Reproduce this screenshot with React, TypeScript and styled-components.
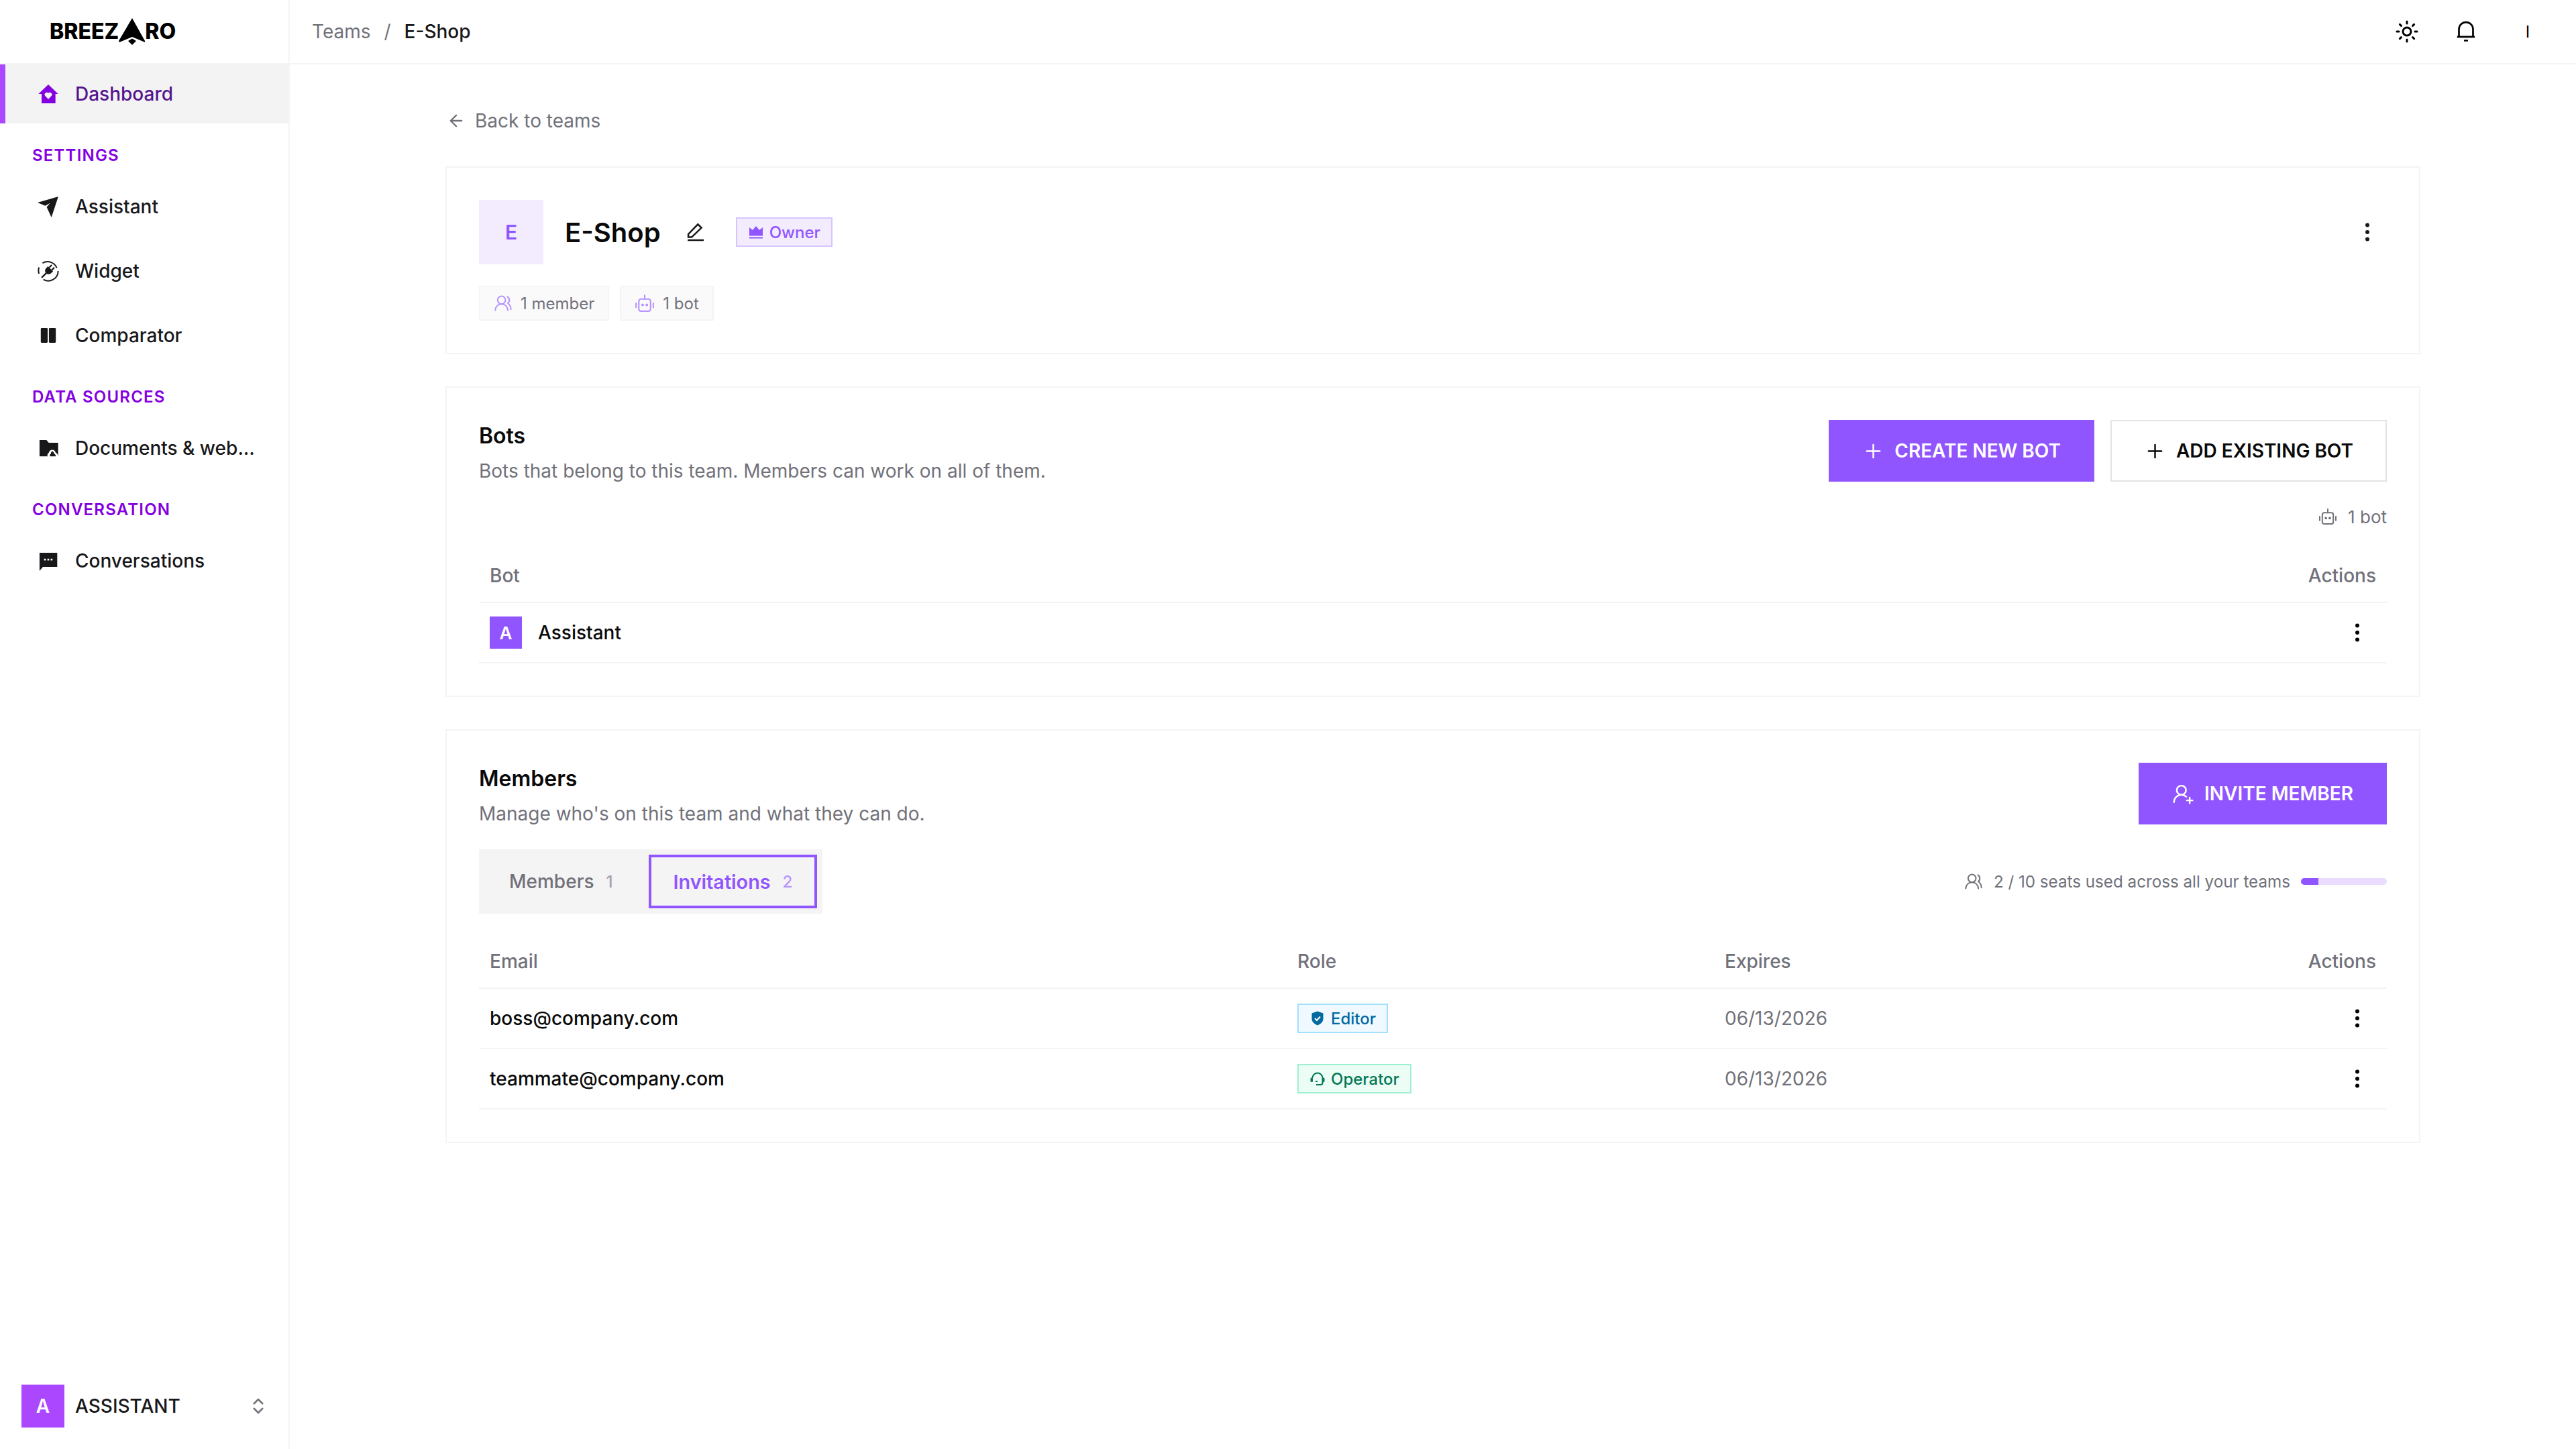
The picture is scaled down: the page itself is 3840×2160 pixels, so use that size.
import React from 'react'
import styled, { createGlobalStyle } from 'styled-components'
import { ArrowLeft, ChevronsUpDown, EllipsisVertical, Plus, Sun, UserRoundPlus, UsersRound } from 'lucide-react'

const GlobalStyle = createGlobalStyle`
    html, body {
        margin: 0;
        background: #fff;
        font-family: Inter, "Noto Sans", sans-serif;
        color: #18181b;
        -webkit-font-smoothing: antialiased;
    }
    * {
        box-sizing: border-box;
    }
`

const violet = '#9155ff'
const line = '#f4f4f5'
const muted = '#71717a'

const Page = styled.div`
    display: flex;
    height: 2160px;
`

const Sidebar = styled.aside`
    display: flex;
    flex-direction: column;
    width: 432px;
    flex-shrink: 0;
    border-right: 2px solid ${line};
`

const LogoBar = styled.div`
    display: flex;
    align-items: flex-start;
    height: 96px;
    padding: 27px 0 0 74px;
    border-bottom: 2px solid ${line};
`

const LogoText = styled.span`
    font-size: 32px;
    font-weight: 800;
    line-height: 24px;
    margin-top: 8px;
    color: #000;
`

const NavRow = styled.div<{ $active?: boolean }>`
    display: flex;
    align-items: center;
    gap: 24px;
    height: 88px;
    margin-bottom: 8px;
    padding-left: 48px;
    border-left: 8px solid ${p => (p.$active ? '#ab47ff' : 'transparent')};
    background: ${p => (p.$active ? '#f3f3f3' : 'transparent')};
    color: ${p => (p.$active ? '#55148f' : '#18181b')};
    font-size: 28px;
    font-weight: 500;
    svg {
        flex-shrink: 0;
        color: ${p => (p.$active ? '#8400e0' : '#18181b')};
    }
`

const NavLabel = styled.div`
    padding: 25px 0 17px 48px;
    font-size: 24px;
    line-height: 30px;
    font-weight: 600;
    letter-spacing: 1.2px;
    color: #8400e0;
`

const SidebarFooter = styled.div`
    display: flex;
    align-items: center;
    margin-top: auto;
    padding: 0 0 32px 32px;
`

const FooterAvatar = styled.div`
    display: flex;
    align-items: center;
    justify-content: center;
    width: 64px;
    height: 64px;
    background: #ab47ff;
    color: #fff;
    font-size: 28px;
    font-weight: 600;
`

const FooterName = styled.span`
    margin-left: 16px;
    width: 258px;
    font-size: 28px;
    font-weight: 500;
`

const Main = styled.main`
    flex: 1;
    display: flex;
    flex-direction: column;
    min-width: 0;
`

const TopBar = styled.header`
    display: flex;
    align-items: center;
    height: 96px;
    padding: 0 24px 0 33px;
    border-bottom: 2px solid ${line};
`

const Crumbs = styled.nav`
    display: flex;
    align-items: center;
    gap: 20px;
    flex: 1;
    font-size: 28px;
    color: ${muted};
`

const CrumbCurrent = styled.span`
    color: #18181b;
    font-weight: 500;
`

const TopButton = styled.div<{ $wide?: boolean }>`
    display: flex;
    align-items: center;
    justify-content: center;
    width: ${p => (p.$wide ? '96px' : '88px')};
    height: 88px;
    color: #000;
    font-size: 24px;
`

const Content = styled.div`
    width: 2944px;
    margin: 0 auto;
    padding-top: 64px;
`

const BackLink = styled.div`
    display: flex;
    align-items: center;
    gap: 14px;
    height: 40px;
    margin-bottom: 48px;
    padding-left: 2px;
    font-size: 28px;
    color: ${muted};
`

const Card = styled.section`
    padding: 48px;
    margin-bottom: 48px;
    border: 2px solid ${line};
    background: #fff;
`

const TeamRow = styled.div`
    display: flex;
    align-items: center;
`

const TeamAvatar = styled.div`
    display: flex;
    align-items: center;
    justify-content: center;
    width: 96px;
    height: 96px;
    background: #f3ecff;
    color: ${violet};
    font-size: 30px;
    font-weight: 600;
`

const TeamName = styled.h1`
    margin: 0 0 0 32px;
    font-size: 40px;
    font-weight: 600;
    color: #0a0a0a;
`

const EditButton = styled.div`
    display: flex;
    margin: 0 45px 0 39px;
`

const OwnerBadge = styled.div`
    display: flex;
    align-items: center;
    gap: 8px;
    height: 44px;
    padding: 0 16px;
    border: 2px solid #d8c4ff;
    background: #f3ecff;
    color: ${violet};
    font-size: 24px;
    font-weight: 500;
`

const CardMenu = styled.div`
    display: flex;
    margin-left: auto;
    margin-right: 11px;
`

const Chips = styled.div`
    display: flex;
    gap: 16px;
    margin-top: 32px;
`

const Chip = styled.div`
    display: flex;
    align-items: center;
    gap: 12px;
    height: 52px;
    padding: 0 20px;
    border: 2px solid ${line};
    background: #fafafa;
    color: ${muted};
    font-size: 24px;
    svg {
        color: #b794ff;
    }
`

const CardHead = styled.div`
    display: flex;
    justify-content: space-between;
    height: 92px;
`

const CardTitle = styled.h2`
    margin: 0;
    font-size: 32px;
    line-height: 48px;
    font-weight: 600;
    color: #0a0a0a;
`

const CardText = styled.p`
    margin: 6px 0 0;
    font-size: 28px;
    line-height: 44px;
    color: ${muted};
`

const Actions = styled.div`
    display: flex;
    gap: 24px;
`

const Button = styled.div<{ $outline?: boolean }>`
    display: flex;
    align-items: center;
    gap: 15px;
    height: 92px;
    padding: 0 48px;
    border: 2px solid ${p => (p.$outline ? '#e4e4e7' : violet)};
    background: ${p => (p.$outline ? '#fff' : violet)};
    color: ${p => (p.$outline ? '#0a0a0a' : '#fff')};
    font-size: 28px;
    font-weight: 600;
`

const CountRow = styled.div`
    display: flex;
    align-items: center;
    justify-content: flex-end;
    gap: 16px;
    height: 40px;
    margin: 32px 0 29px;
    font-size: 26px;
    color: ${muted};
`

const TableRow = styled.div<{ $cols: string }>`
    display: grid;
    grid-template-columns: ${p => p.$cols};
    align-items: center;
    height: 90px;
    padding: 0 0 0 16px;
    border-bottom: 2px solid ${line};
    font-size: 28px;
    font-weight: 500;
    color: #0a0a0a;
`

const HeaderRow = styled(TableRow)`
    height: 80px;
    color: ${muted};
`

const RightCell = styled.div`
    justify-self: end;
    padding-right: 16px;
`

const MenuCell = styled.div`
    display: flex;
    justify-self: end;
    padding-right: 26px;
    color: #000;
`

const BotCell = styled.div`
    display: flex;
    align-items: center;
    gap: 24px;
`

const BotAvatar = styled.div`
    display: flex;
    align-items: center;
    justify-content: center;
    width: 48px;
    height: 48px;
    background: ${violet};
    color: #fff;
    font-size: 26px;
    font-weight: 600;
`

const TabsRow = styled.div`
    display: flex;
    align-items: center;
    justify-content: space-between;
    margin: 37px 0 32px;
`

const Tabs = styled.div`
    display: flex;
    gap: 16px;
    padding: 8px;
    background: #f4f4f5;
`

const Tab = styled.div<{ $active?: boolean }>`
    display: flex;
    align-items: center;
    gap: 18px;
    height: 80px;
    padding: 0 33px;
    border: 4px solid ${p => (p.$active ? violet : 'transparent')};
    color: ${p => (p.$active ? violet : muted)};
    font-size: ${p => (p.$active ? '28.8px' : '28px')};
    font-weight: ${p => (p.$active ? 600 : 500)};
`

const TabCount = styled.span<{ $active?: boolean }>`
    font-size: 24px;
    font-weight: 500;
    color: ${p => (p.$active ? '#b794ff' : '#a1a1aa')};
`

const Seats = styled.div`
    display: flex;
    align-items: center;
    gap: 16px;
    font-size: 24.2px;
    color: ${muted};
`

const SeatTrack = styled.div`
    width: 128px;
    height: 10px;
    border-radius: 5px;
    overflow: hidden;
    background: #e9dcff;
`

const SeatFill = styled.div`
    height: 100%;
    background: ${violet};
`

const RoleBadge = styled.div<{ $bg: string; $border: string; $color: string }>`
    display: inline-flex;
    align-items: center;
    justify-self: start;
    gap: 8px;
    height: 44px;
    padding: 0 16px;
    border: 2px solid ${p => p.$border};
    background: ${p => p.$bg};
    color: ${p => p.$color};
    font-size: 24px;
    font-weight: 500;
`

const DateCell = styled.div`
    color: ${muted};
    font-weight: 400;
`

type IconProps = { size?: number }

const HomeHeartIcon = ({ size = 32 }: IconProps) => (
    <svg width={size} height={size} viewBox="0 0 24 24" fill="currentColor">
        <path
            fillRule="evenodd"
            d="M12 1.5 23 12h-3v10.500H4.500V12H1zM12 17.800l-3.700-3.700a2.400 2.400 0 0 1 3.700-3 2.400 2.400 0 0 1 3.700 3z"
        />
    </svg>
)

const PlaneIcon = ({ size = 32 }: IconProps) => (
    <svg width={size} height={size} viewBox="0 0 24 24" fill="currentColor">
        <path d="M23.200.8 0 7.500l8.600 3.600L14 8l-3.800 4.600L15.500 24z" />
    </svg>
)

const PlugIcon = ({ size = 32 }: IconProps) => (
    <svg width={size} height={size} viewBox="0 0 24 24" fill="none" stroke="currentColor">
        <path d="M5.500 3.200a11 11 0 0 1 16 5.300M23 12a11 11 0 0 1-16.500 9.500M1.600 15a11 11 0 0 1 0-7" strokeWidth="1.500" />
        <g transform="rotate(45 12 12)">
            <path d="M8 8.500h8v3a4 4 0 0 1-8 0z" fill="currentColor" stroke="none" />
            <path d="M10 4.500v4M14 4.500v4M12 15v7.500" strokeWidth="1.700" />
        </g>
    </svg>
)

const ColumnsIcon = ({ size = 32 }: IconProps) => (
    <svg width={size} height={size} viewBox="0 0 24 24" fill="currentColor">
        <rect x="3.600" y="3.800" width="7.700" height="16.400" rx="1" />
        <rect x="12.700" y="3.800" width="7.700" height="16.400" rx="1" />
    </svg>
)

const FolderCloudIcon = ({ size = 32 }: IconProps) => (
    <svg width={size} height={size} viewBox="0 0 24 24" fill="currentColor">
        <path d="M2.200 3H10l2.500 3H23v15.200H2.200z" />
        <path d="M11.500 22c-1-2-.6-3.800 1-4.800.6-2.200 2-3.400 3.900-3.400 2 0 3.300 1.200 3.900 3.400 1.600.4 2.700 1.900 2.700 4.800z" fill="#fff" />
        <path d="M13.800 21.200c-.4-1.500.2-2.500 1-2.900.3-1.700.9-2.700 1.700-2.700 1 0 1.700 1 2 2.700 1.200.3 1.900 1.300 1.800 2.900z" />
    </svg>
)

const ChatIcon = ({ size = 32 }: IconProps) => (
    <svg width={size} height={size} viewBox="0 0 24 24" fill="currentColor">
        <path d="M2.200 3H22v15.800H6L2.200 23.300z" />
        <g fill="#fff">
            <rect x="7.300" y="9.600" width="2" height="2" />
            <rect x="11" y="9.600" width="2" height="2" />
            <rect x="14.700" y="9.600" width="2" height="2" />
        </g>
    </svg>
)

const BellIcon = ({ size = 36 }: IconProps) => (
    <svg width={size} height={size} viewBox="0 0 24 24" fill="none" stroke="currentColor" strokeWidth="1.800">
        <path d="M5 17.300V9.700a7 7 0 0 1 14 0v7.600M3.200 17.300h17.600M10 21h4" />
    </svg>
)

const PencilIcon = ({ size = 28 }: IconProps) => (
    <svg width={size} height={size} viewBox="0 0 24 24" fill="none" stroke="currentColor" strokeWidth="2.200">
        <path d="M1.800 18.500v-4L14 2l4.500 4.500L6 18.500zM1 22.300h20.500" />
    </svg>
)

const CrownIcon = ({ size = 24 }: IconProps) => (
    <svg width={size} height={size} viewBox="0 0 24 24" fill="currentColor">
        <path d="M2 5l5 4 5-6 5 6 5-4v12.500H2z" />
        <rect x="2" y="19.500" width="20" height="2" />
    </svg>
)

const BotIcon = ({ size = 30 }: IconProps) => (
    <svg width={size} height={size} viewBox="0 0 24 24" fill="none" stroke="currentColor" strokeWidth="1.700" strokeLinecap="round">
        <rect x="5" y="7" width="14" height="14.500" rx="2.500" />
        <path d="M12 7V2.500M1.700 12v5M22.300 12v5" />
        <circle cx="9.500" cy="14" r=".8" fill="currentColor" />
        <circle cx="14.500" cy="14" r=".8" fill="currentColor" />
    </svg>
)

const ShieldCheckIcon = ({ size = 24 }: IconProps) => (
    <svg width={size} height={size} viewBox="0 0 24 24" fill="currentColor">
        <path d="M12 1.500l8.500 3v8c0 4.500-3.500 8-8.500 10-5-2-8.500-5.500-8.500-10v-8z" />
        <path d="M8 12l3 3 5-5.500" fill="none" stroke="#fff" strokeWidth="2" />
    </svg>
)

const HeadsetIcon = ({ size = 24 }: IconProps) => (
    <svg width={size} height={size} viewBox="0 0 24 24" fill="none" stroke="currentColor" strokeWidth="2">
        <path d="M4.500 11a7.500 7.500 0 0 1 15 0v7a3 3 0 0 1-3 3H10" />
        <rect x="1.500" y="10.500" width="3.500" height="6.500" rx="1.500" fill="currentColor" stroke="none" />
        <rect x="19" y="10.500" width="3.500" height="6.500" rx="1.500" fill="currentColor" stroke="none" />
        <path d="M9 16h3" />
    </svg>
)

const navGroups = [
    { label: 'SETTINGS', items: [['Assistant', PlaneIcon], ['Widget', PlugIcon], ['Comparator', ColumnsIcon]] },
    { label: 'DATA SOURCES', items: [['Documents & web...', FolderCloudIcon]] },
    { label: 'CONVERSATION', items: [['Conversations', ChatIcon]] },
] as const

const memberCols = '1204px 637px 1fr 200px'
const botCols = '1fr 200px'

const invitations = [
    {
        email: 'boss@company.com',
        role: 'Editor',
        icon: <ShieldCheckIcon />,
        bg: '#f0f9ff',
        border: '#a3e0ff',
        color: '#0369a1',
    },
    {
        email: 'teammate@company.com',
        role: 'Operator',
        icon: <HeadsetIcon />,
        bg: '#ecfdf5',
        border: '#9df0cf',
        color: '#047857',
    },
]

const App = () => {
    return (
        <Page>
            <GlobalStyle />
            <Sidebar>
                <LogoBar>
                    <LogoText>BREEZ</LogoText>
                    <svg width="39" height="40" viewBox="0 0 39 40" fill="#000">
                        <path d="M20 0 39 34v2L26 30.500 20 28l-6 2.500L1 36l-1-2z" />
                        <path d="M20 30.500l6 3.500-6 6-6-6z" />
                    </svg>
                    <LogoText>RO</LogoText>
                </LogoBar>
                <NavRow $active>
                    <HomeHeartIcon />
                    Dashboard
                </NavRow>
                {navGroups.map(group => (
                    <div key={group.label}>
                        <NavLabel>{group.label}</NavLabel>
                        {group.items.map(([name, Icon]) => (
                            <NavRow key={name}>
                                <Icon />
                                {name}
                            </NavRow>
                        ))}
                    </div>
                ))}
                <SidebarFooter>
                    <FooterAvatar>A</FooterAvatar>
                    <FooterName>ASSISTANT</FooterName>
                    <ChevronsUpDown size={30} color={muted} />
                </SidebarFooter>
            </Sidebar>
            <Main>
                <TopBar>
                    <Crumbs>
                        <span>Teams</span>
                        <span>/</span>
                        <CrumbCurrent>E-Shop</CrumbCurrent>
                    </Crumbs>
                    <TopButton><Sun size={36} /></TopButton>
                    <TopButton><BellIcon /></TopButton>
                    <TopButton $wide>I</TopButton>
                </TopBar>
                <Content>
                    <BackLink>
                        <ArrowLeft size={28} />
                        Back to teams
                    </BackLink>
                    <Card>
                        <TeamRow>
                            <TeamAvatar>E</TeamAvatar>
                            <TeamName>E-Shop</TeamName>
                            <EditButton><PencilIcon /></EditButton>
                            <OwnerBadge>
                                <CrownIcon />
                                Owner
                            </OwnerBadge>
                            <CardMenu><EllipsisVertical size={36} /></CardMenu>
                        </TeamRow>
                        <Chips>
                            <Chip>
                                <UsersRound size={28} strokeWidth={1.7} />
                                1 member
                            </Chip>
                            <Chip>
                                <BotIcon />
                                1 bot
                            </Chip>
                        </Chips>
                    </Card>
                    <Card>
                        <CardHead>
                            <div>
                                <CardTitle>Bots</CardTitle>
                                <CardText>Bots that belong to this team. Members can work on all of them.</CardText>
                            </div>
                            <Actions>
                                <Button>
                                    <Plus size={33} strokeWidth={1.8} />
                                    CREATE NEW BOT
                                </Button>
                                <Button $outline>
                                    <Plus size={33} strokeWidth={1.8} />
                                    ADD EXISTING BOT
                                </Button>
                            </Actions>
                        </CardHead>
                        <CountRow>
                            <BotIcon size={28} />
                            1 bot
                        </CountRow>
                        <HeaderRow $cols={botCols}>
                            <div>Bot</div>
                            <RightCell>Actions</RightCell>
                        </HeaderRow>
                        <TableRow $cols={botCols}>
                            <BotCell>
                                <BotAvatar>A</BotAvatar>
                                Assistant
                            </BotCell>
                            <MenuCell><EllipsisVertical size={36} /></MenuCell>
                        </TableRow>
                    </Card>
                    <Card>
                        <CardHead>
                            <div>
                                <CardTitle>Members</CardTitle>
                                <CardText>Manage who's on this team and what they can do.</CardText>
                            </div>
                            <Button>
                                <UserRoundPlus size={33} strokeWidth={1.8} />
                                INVITE MEMBER
                            </Button>
                        </CardHead>
                        <TabsRow>
                            <Tabs>
                                <Tab>
                                    Members
                                    <TabCount>1</TabCount>
                                </Tab>
                                <Tab $active>
                                    Invitations
                                    <TabCount $active>2</TabCount>
                                </Tab>
                            </Tabs>
                            <Seats>
                                <UsersRound size={28} strokeWidth={1.7} />
                                2 / 10 seats used across all your teams
                                <SeatTrack>
                                    <SeatFill style={{ width: `${(2 / 10) * 100}%` }} />
                                </SeatTrack>
                            </Seats>
                        </TabsRow>
                        <HeaderRow $cols={memberCols}>
                            <div>Email</div>
                            <div>Role</div>
                            <div>Expires</div>
                            <RightCell>Actions</RightCell>
                        </HeaderRow>
                        {invitations.map(invite => (
                            <TableRow key={invite.email} $cols={memberCols}>
                                <div>{invite.email}</div>
                                <RoleBadge $bg={invite.bg} $border={invite.border} $color={invite.color}>
                                    {invite.icon}
                                    {invite.role}
                                </RoleBadge>
                                <DateCell>06/13/2026</DateCell>
                                <MenuCell><EllipsisVertical size={36} /></MenuCell>
                            </TableRow>
                        ))}
                    </Card>
                </Content>
            </Main>
        </Page>
    )
}

export default App
